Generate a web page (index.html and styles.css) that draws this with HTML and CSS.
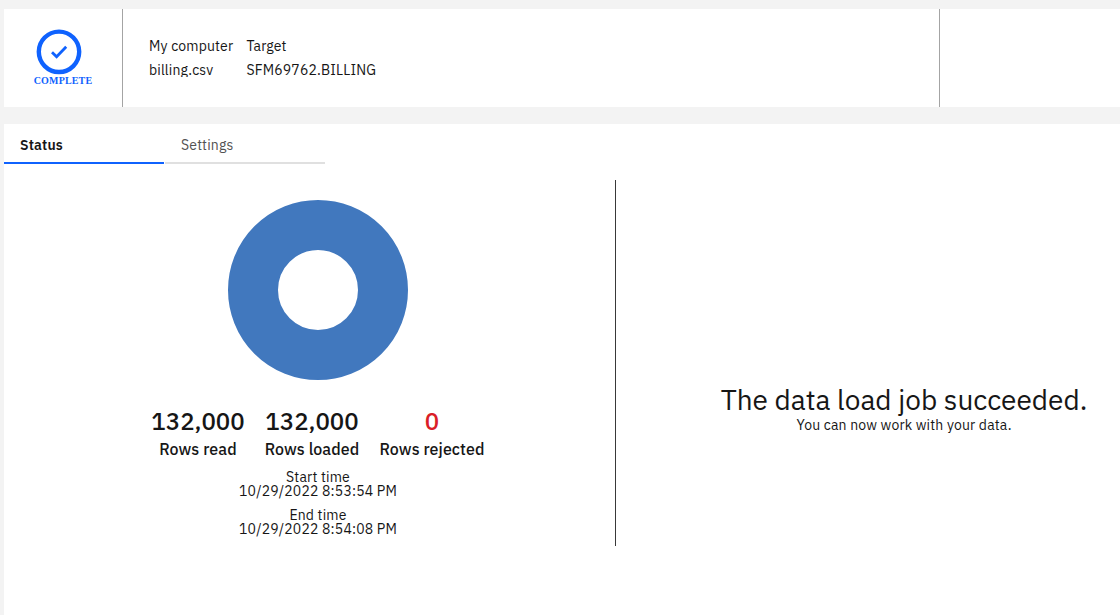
FILE: index.html
```html
<!DOCTYPE html>
<html lang="en">
<head>
<meta charset="utf-8">
<title>Data load job</title>
<link rel="stylesheet" href="styles.css">
</head>
<body>
<header class="summary">
  <div class="job-state">
    <svg class="state-icon" width="46" height="46" viewBox="0 0 46 46" aria-hidden="true">
      <circle cx="23" cy="22.8" r="20.2" fill="none" stroke="#0f62fe" stroke-width="4.4"/>
      <path d="M16 23.2l4.6 4.6 9.6-10" fill="none" stroke="#0f62fe" stroke-width="2.8"/>
    </svg>
    <span class="state-label">COMPLETE</span>
  </div>
  <div class="route">
    <div class="endpoint source"><span class="endpoint-kind">My computer</span><span class="endpoint-name">billing.csv</span></div>
    <div class="endpoint target"><span class="endpoint-kind">Target</span><span class="endpoint-name">SFM69762.BILLING</span></div>
  </div>
  <div class="actions"></div>
</header>
<main class="panel">
  <nav class="tabs">
    <a class="tab tab-active">Status</a>
    <a class="tab">Settings</a>
  </nav>
  <div class="content">
    <section class="progress">
      <svg class="donut" width="180" height="180" viewBox="0 0 180 180" aria-hidden="true">
        <circle cx="90" cy="90" r="65" fill="none" stroke="#4178be" stroke-width="50"/>
      </svg>
      <div class="stats">
        <div class="stat stat-read"><span class="stat-value">132,000</span><span class="stat-label">Rows read</span></div>
        <div class="stat stat-loaded"><span class="stat-value">132,000</span><span class="stat-label">Rows loaded</span></div>
        <div class="stat stat-rejected"><span class="stat-value">0</span><span class="stat-label">Rows rejected</span></div>
      </div>
      <div class="time"><span class="time-label">Start time</span><span class="time-value">10/29/2022 8:53:54 PM</span></div>
      <div class="time"><span class="time-label">End time</span><span class="time-value">10/29/2022 8:54:08 PM</span></div>
    </section>
    <section class="result">
      <h1 class="result-title">The data load job succeeded.</h1>
      <p class="result-text">You can now work with your data.</p>
    </section>
  </div>
</main>
</body>
</html>
```

FILE: styles.css
```css
* { box-sizing: border-box; }
body {
  margin: 0;
  padding: 9px 0 0 4px;
  height: 615px;
  overflow: hidden;
  background: #f3f3f3;
  color: #161616;
  font-family: "IBM Plex Sans", Roboto, "Liberation Sans", sans-serif;
  font-size: 14px;
  font-weight: 400;
  letter-spacing: 0.16px;
}
.summary { display: flex; height: 98px; background: #fff; }
.job-state {
  width: 119px;
  padding-top: 20px;
  border-right: 1px solid #a4a4a4;
  display: flex;
  flex-direction: column;
  align-items: center;
}
.state-icon { display: block; margin-right: 8px; }
.state-label {
  font: bold 10px/12px "Liberation Serif", serif;
  color: #0f62fe;
  white-space: nowrap;
}
.route {
  width: 817px;
  padding: 28px 0 0 26px;
  border-right: 1px solid #a4a4a4;
  display: flex;
}
.endpoint { display: flex; flex-direction: column; gap: 6px; line-height: 18px; white-space: nowrap; }
.source { width: 97.4px; }
.endpoint-name { height: 16px; overflow: hidden; }
.panel { margin-top: 17px; height: 491px; background: #fff; }
.tabs { display: flex; gap: 1px; }
.tab {
  width: 160px;
  height: 40px;
  padding: 12px 16px 0;
  border-bottom: 2px solid #e0e0e0;
  line-height: 18px;
  color: #525252;
}
.tab-active { border-bottom-color: #0f62fe; color: #161616; font-weight: 600; }
.content { display: flex; height: 382px; padding: 16px 0 0 16px; }
.progress {
  flex: none;
  width: 596px;
  height: 366px;
  padding: 20px 0 0;
  border-right: 1px solid #393939;
  display: flex;
  flex-direction: column;
  align-items: center;
}
.donut { display: block; }
.stats { display: flex; gap: 21px; margin-top: 25px; padding-left: 1px; }
.stat { display: flex; flex-direction: column; align-items: center; font-weight: 500; white-space: nowrap; }
.stat-read { width: 92px; }
.stat-loaded { width: 94px; }
.stat-rejected { width: 104px; }
.stat-value { font-size: 24px; line-height: 32px; letter-spacing: 0; }
.stat-label { font-size: 16px; line-height: 24px; letter-spacing: 0.08px; }
.stat-rejected .stat-value { color: #da1e28; }
.time {
  margin-top: 8px;
  padding: 1px 0 0 1px;
  height: 30px;
  line-height: 14px;
  display: flex;
  flex-direction: column;
  align-items: center;
}
.result {
  flex: 1;
  padding: 202px 0 0 72px;
  text-align: center;
  white-space: nowrap;
}
.result-title { margin: 0; font-size: 28px; line-height: 36px; font-weight: 400; letter-spacing: 0; }
.result-text { margin: 0; line-height: 14px; }
```
